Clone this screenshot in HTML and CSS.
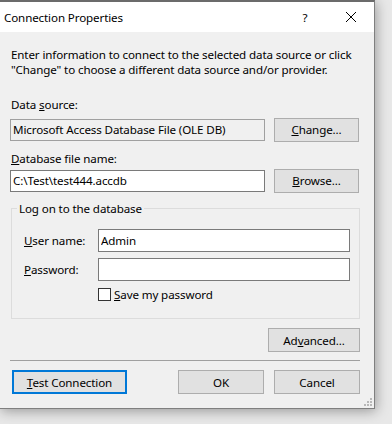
FILE: index.html
```html
<!DOCTYPE html>
<html lang="en">
<head>
  <meta charset="UTF-8" />
  <title>Connection Properties</title>
  <link rel="stylesheet" href="styles.css">
</head>
<body>
  <div class="window">
    <div class="titlebar">
      <span class="title">Connection Properties</span>
      <span class="tb-btn help">?</span>
      <span class="tb-btn close">
        <svg width="10" height="10" viewBox="0 0 10 10"><path d="M0 0L10 10M10 0L0 10" stroke="#000" stroke-width="1" fill="none"/></svg>
      </span>
    </div>

    <div class="dialog">
      <p class="intro">Enter information to connect to the selected data source or click<br>"Change" to choose a different data source and/or provider.</p>

      <div class="label first">Data <u>s</u>ource:</div>
      <div class="row">
        <input class="field readonly" type="text" value="Microsoft Access Database File (OLE DB)" readonly />
        <button class="btn side"><u>C</u>hange...</button>
      </div>

      <div class="label second"><u>D</u>atabase file name:</div>
      <div class="row">
        <input class="field" type="text" value="C:\Test\test444.accdb" />
        <button class="btn side"><u>B</u>rowse...</button>
      </div>

      <fieldset class="group">
        <legend>Log on to the database</legend>
        <div class="login-row">
          <label><u>U</u>ser name:</label>
          <input class="field" type="text" value="Admin" />
        </div>
        <div class="login-row pw">
          <label><u>P</u>assword:</label>
          <input class="field" type="password" value="" />
        </div>
        <div class="check-row">
          <span class="checkbox"></span>
          <span><u>S</u>ave my password</span>
        </div>
      </fieldset>

      <div class="adv-row">
        <button class="btn adv">Ad<u>v</u>anced...</button>
      </div>

      <div class="sep"></div>

      <div class="bottom-row">
        <button class="btn test"><u>T</u>est Connection</button>
        <span class="spacer"></span>
        <button class="btn ok">OK</button>
        <button class="btn ok">Cancel</button>
      </div>
    </div>

    <svg class="grip" width="10" height="10" viewBox="0 0 10 10">
      <rect x="8" y="2" width="2" height="2" />
      <rect x="5" y="5" width="2" height="2" />
      <rect x="8" y="5" width="2" height="2" />
      <rect x="2" y="8" width="2" height="2" />
      <rect x="5" y="8" width="2" height="2" />
      <rect x="8" y="8" width="2" height="2" />
    </svg>
  </div>
</body>
</html>
```

FILE: styles.css
```css
:root {
  --face: #f0f0f0;
  --btn: #e1e1e1;
  --btn-border: #adadad;
  --edit-border: #7a7a7a;
  --accent: #0078d7;
}

* {
  box-sizing: border-box;
}

html, body {
  margin: 0;
  padding: 0;
  background: #e8e8e8;
}

body {
  font-family: "Noto Sans", "Open Sans", sans-serif;
  font-size: 11.6px;
  letter-spacing: -0.12px;
  line-height: 15px;
  color: #000;
  height: 424px;
  overflow: hidden;
}

.window {
  position: relative;
  width: 375px;
  height: 409px;
  background: var(--face);
  border-top: 2px solid #6b6b6b;
  border-right: 1px solid #7f7f7f;
  border-bottom: 1px solid #7f7f7f;
  box-shadow: 1px 2px 12px rgba(0, 0, 0, 0.35);
}

.titlebar {
  display: flex;
  align-items: center;
  height: 30px;
  background: #fff;
  padding-left: 4px;
}

.title {
  flex: 1;
}

.tb-btn {
  width: 46px;
  height: 30px;
  display: flex;
  align-items: center;
  justify-content: center;
}

.dialog {
  padding: 15px 14px 0 10px;
}

.intro {
  margin: 0;
  padding-left: 1px;
  white-space: nowrap;
}

.label {
  padding-left: 1px;
}

.label.first {
  margin-top: 20px;
  margin-bottom: 5px;
}

.label.second {
  margin-top: 9px;
  margin-bottom: 2px;
}

.row {
  display: flex;
  align-items: center;
  gap: 9px;
  height: 25px;
}

.field {
  font: inherit;
  letter-spacing: inherit;
  color: #000;
  height: 22px;
  padding: 0 2px;
  margin: 0;
  border: 1px solid var(--edit-border);
  background: #fff;
  outline: none;
}

.row .field {
  width: 255px;
}

.field.readonly {
  background: var(--face);
  border-color: #a0a0a0;
}

.btn {
  font: inherit;
  letter-spacing: inherit;
  color: #000;
  height: 24px;
  margin: 0;
  padding: 0;
  background: var(--btn);
  border: 1px solid var(--btn-border);
  border-radius: 0;
}

.btn.side {
  width: 85px;
}

.group {
  margin: 8px 0 0 1px;
  padding: 13px 9px 16px 12px;
  border: 1px solid #dcdcdc;
}

.group legend {
  padding: 0 2px;
  margin-left: -7px;
}

.login-row {
  display: flex;
  align-items: center;
  height: 23px;
}

.login-row.pw {
  margin-top: 6px;
}

.login-row label {
  width: 74px;
}

.login-row .field {
  flex: 1;
  height: 23px;
}

.check-row {
  display: flex;
  align-items: center;
  margin-top: 6px;
  padding-left: 74px;
}

.checkbox {
  width: 13px;
  height: 13px;
  border: 1px solid #333;
  background: #fff;
  margin-right: 3px;
}

.adv-row {
  display: flex;
  justify-content: flex-end;
  margin-top: 9px;
}

.btn.adv {
  width: 92px;
}

.sep {
  height: 1px;
  background: #a0a0a0;
  margin-top: 8px;
}

.bottom-row {
  display: flex;
  gap: 10px;
  margin-top: 9px;
  padding-left: 2px;
}

.spacer {
  flex: 1;
}

.btn.test {
  width: 115px;
  border: 2px solid var(--accent);
}

.btn.ok {
  width: 86px;
}

.grip {
  position: absolute;
  right: 2px;
  bottom: 2px;
  fill: #b8b8b8;
}
```
